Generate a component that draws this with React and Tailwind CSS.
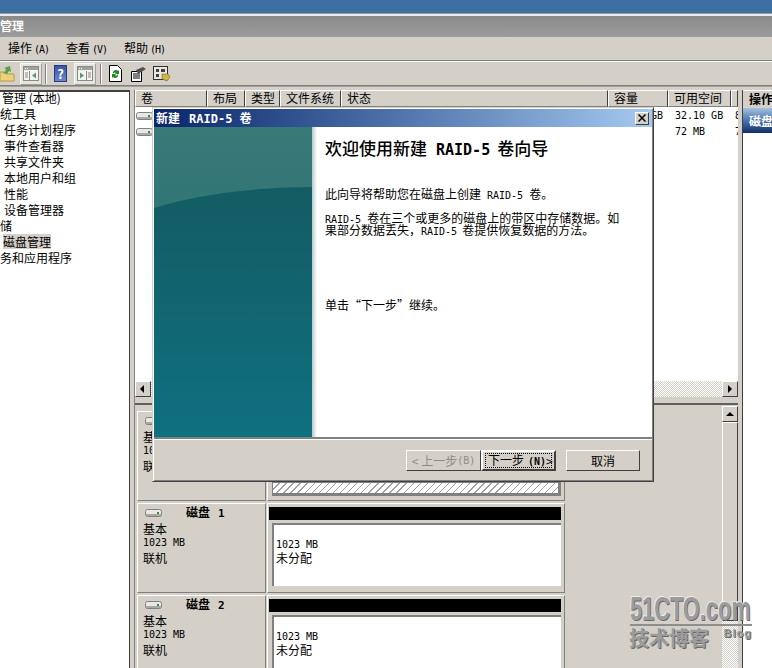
const SONG = "font-['Noto_Sans_CJK_SC',sans-serif]";

// half-width latin text, the reference font runs 6px per char at 12px
function L({ children, className = 'text-[10px]' }) {
  return <span className={`font-['DejaVu_Sans_Mono',monospace] ${className}`}>{children}</span>;
}

function DiskIcon() {
  return (
    <svg width="18" height="10" viewBox="0 0 18 10">
      <rect x="0.5" y="1.5" width="16" height="7" rx="2" fill="#e8e8e4" stroke="#808080" />
      <rect x="1" y="6" width="15" height="2" fill="#a8a8a0" />
      <rect x="12" y="4" width="2" height="2" fill="#3c8c3c" />
    </svg>
  );
}

function PaneIcon({ flip }) {
  return (
    <svg width="16" height="15" viewBox="0 0 16 15">
      <rect x="0.5" y="0.5" width="15" height="14" fill="#f4f4f0" stroke="#8a8a86" />
      <rect x="1" y="1" width="14" height="3" fill="#a0a09c" />
      <path d="M2 2.5h1M4 2.5h1" stroke="#fff" />
      <path d={flip ? 'M9.5 5v9' : 'M6.5 5v9'} stroke="#8a8a86" />
      {flip ? (
        <>
          <path d="M3 6.5l4 3-4 3z" fill="#4f9f6f" />
          <path d="M11 7h3M11 9h3M11 11h3" stroke="#8a8a86" />
        </>
      ) : (
        <>
          <path d="M13 6.5l-4 3 4 3z" fill="#4f9f6f" />
          <path d="M2 7h3M2 9h3M2 11h3" stroke="#8a8a86" />
        </>
      )}
    </svg>
  );
}

function Pressed({ flip }) {
  return (
    <div className="w-[22px] h-[22px] flex items-center justify-center border border-[#f8f8f4] border-r-[#a0a09c] border-b-[#a0a09c] bg-[#e6e4de]">
      <PaneIcon flip={flip} />
    </div>
  );
}

function Sep() {
  return <div className="w-[2px] h-[20px] border-l border-[#808080] bg-white" />;
}

function Head({ w, children }) {
  return (
    <div className="h-[17px] shrink-0 pl-[5px] overflow-hidden whitespace-nowrap text-[12px] leading-[14px] bg-[#d4d0c8] border-t border-l border-t-white border-l-white border-r border-b border-r-[#404040] border-b-[#808080]" style={{ width: w }}>
      {children}
    </div>
  );
}

function Arrow({ d }) {
  const paths = { l: 'M6 1L2 5l4 4z', r: 'M3 1l4 4-4 4z', u: 'M1 7l4-4 4 4z' };
  return (
    <div className="w-[16px] h-[16px] shrink-0 flex items-center justify-center bg-[#d4d0c8] border border-white border-r-[#404040] border-b-[#404040]">
      <svg width="10" height="10" viewBox="0 0 10 10"><path d={paths[d]} fill="#000" /></svg>
    </div>
  );
}

function Disk({ name, hatch, last }) {
  return (
    <div className={`flex shrink-0 ${last ? 'h-[80px]' : 'h-[90px] mb-[2px]'}`}>
      <div className="w-[129px] shrink-0 pl-[5px] pt-[2px] border border-white border-r-[#808080] border-b-[#808080] text-[12px] overflow-hidden">
        <div className="flex items-center h-[14px] leading-[14px] ml-[2px]">
          <DiskIcon />
          <span className="ml-[23px] font-bold whitespace-nowrap">磁盘<L className="text-[11px] ml-[8px]">{name}</L></span>
        </div>
        <div className="mt-[1px] h-[14px] leading-[15px]">基本</div>
        <div className="h-[15px] leading-[11px]"><L>1023 MB</L></div>
        <div className="h-[15px] leading-[16px]">联机</div>
      </div>
      <div className="w-[298px] shrink-0 ml-[1px] px-[1px] pt-[3px] border border-white border-r-[#808080] border-b-[#808080] overflow-hidden">
        <div className="w-[292px] h-[13px] bg-black" />
        {hatch ? (
          <div className="w-[289px] h-[66px] mt-[2px] ml-[3px] pl-[1px] pt-[53px] bg-[#808080]">
            <div className="w-[285px] h-[10px] bg-[repeating-linear-gradient(135deg,#fff_0_4px,#a0a0a0_4px_5px)]" />
          </div>
        ) : (
          <div className="w-[289px] h-[63px] mt-[3px] ml-[3px] bg-white border-t-2 border-l-2 border-[#808080] pl-[2px] pt-[12px] text-[12px]">
            <div className="h-[14px] leading-[12px]"><L>1023 MB</L></div>
            <div className="h-[14px] leading-[14px]">未分配</div>
          </div>
        )}
      </div>
    </div>
  );
}

function DlgButton({ children, className = '' }) {
  return (
    <div className={`h-[21px] flex items-center justify-center text-[12px] whitespace-nowrap bg-[#d4d0c8] border border-white border-r-[#404040] border-b-[#404040] ${className}`}>
      {children}
    </div>
  );
}

const TREE = [
  ['管理 (本地)', 'pl-[2px]'],
  ['统工具', ''],
  ['任务计划程序', 'pl-[4px]'],
  ['事件查看器', 'pl-[4px]'],
  ['共享文件夹', 'pl-[4px]'],
  ['本地用户和组', 'pl-[4px]'],
  ['性能', 'pl-[4px]'],
  ['设备管理器', 'pl-[4px]'],
  ['储', ''],
];

export default function App() {
  return (
    <div className={`relative w-[772px] h-[668px] overflow-hidden flex flex-col bg-[#d4d0c8] text-black ${SONG}`}>
      <div className="h-[13px] shrink-0 bg-[#3d6fa3]" />
      <div className="h-[3px] shrink-0 bg-[#ececec] border-t border-[#9a9a9a]" />
      <div className="h-[21px] shrink-0 bg-gradient-to-b from-[#8a8a8a] to-[#9c9c9c] text-white text-[12px] font-bold leading-[19px]">管理</div>

      <div className="h-[24px] shrink-0 flex items-center pl-[8px] pb-[2px] text-[12px] border-b border-[#808080]">
        <span className="w-[58px] whitespace-nowrap">操作<L className="text-[10px] ml-[2px] tracking-[-1px]">(A)</L></span>
        <span className="w-[58px] whitespace-nowrap">查看<L className="text-[10px] ml-[2px] tracking-[-1px]">(V)</L></span>
        <span className="whitespace-nowrap">帮助<L className="text-[10px] ml-[2px] tracking-[-1px]">(H)</L></span>
      </div>

      <div className="h-[25px] shrink-0 flex items-center border-t border-white border-b border-b-[#808080]">
        <svg width="15" height="16" viewBox="0 0 15 16">
          <path d="M0 6h5l1 2h8v7H0z" fill="#ecd27a" stroke="#b89a40" />
          <path d="M2 7l3-1 1-3-2-1 6-2 1 6-2-1-2 3z" fill="#5aa03c" />
        </svg>
        <div className="ml-[5px]"><Pressed /></div>
        <div className="ml-[3px]"><Sep /></div>
        <div className="ml-[7px] w-[13px] h-[17px] bg-gradient-to-b from-[#3a56a8] to-[#6a88d0] border border-[#2a3a7a] text-white text-[13px] font-bold leading-[15px] text-center">?</div>
        <div className="ml-[7px]"><Pressed flip /></div>
        <div className="ml-[4px]"><Sep /></div>
        <svg width="15" height="17" viewBox="0 0 15 17" className="ml-[6px]">
          <path d="M1.5.5h8l4 4v12h-12z" fill="#fff" stroke="#000" />
          <path d="M5 7a3 3 0 0 1 5-1l1-1v4H7l1-1a2 2 0 0 0-3 1zM10 11a3 3 0 0 1-5 1l-1 1V9h4l-1 1a2 2 0 0 0 3-1z" fill="#208a20" />
        </svg>
        <svg width="17" height="16" viewBox="0 0 17 16" className="ml-[7px]">
          <path d="M1.5 5.5h10v10h-10z" fill="#fff" stroke="#000" />
          <path d="M3 8h7M3 10h7M3 12h7" stroke="#000" />
          <path d="M6 4l7-3 3 2-8 5z" fill="#505050" />
        </svg>
        <svg width="18" height="17" viewBox="0 0 18 17" className="ml-[6px]">
          <rect x="0.5" y="1.5" width="14" height="13" fill="#e8e8e0" stroke="#303030" />
          <path d="M3 4h3v3H3zM8 4h4v3H8zM3 9h3v3H3z" fill="#404040" />
          <path d="M9 9h6l2 3-3 4-5-2z" fill="#d0b840" stroke="#605010" strokeWidth="0.5" />
        </svg>
      </div>

      <div className="flex-1 flex min-h-0 pt-[3px] border-t border-[#a0a0a0]">
        {/* tree */}
        <div className="w-[130px] shrink-0 bg-white border-t-2 border-r border-[#404040] text-[12px] leading-[16px] overflow-hidden">
          <div className="-mt-[2px]">
            {TREE.map(([t, c]) => (
              <div key={t} className={`h-[16px] whitespace-nowrap ${c}`}>{t}</div>
            ))}
            <div className="h-[16px] pl-[3px]"><span className="bg-[#d4d0c8] inline-block h-[15px]">磁盘管理</span></div>
            <div className="h-[16px] whitespace-nowrap">务和应用程序</div>
          </div>
        </div>

        {/* center */}
        <div className="w-[604px] shrink-0 ml-[4px] flex flex-col border-l border-[#808080]">
          <div className="flex shrink-0">
            <Head w={72}>卷</Head>
            <Head w={38}>布局</Head>
            <Head w={35}>类型</Head>
            <Head w={61}>文件系统</Head>
            <Head w={267}>状态</Head>
            <Head w={60}>容量</Head>
            <Head w={63}>可用空间</Head>
            <Head w={7}>S</Head>
          </div>
          <div className="h-[274px] shrink-0 bg-white flex text-[12px]">
            <div className="flex-1 pl-[1px] pt-[4px]">
              <div className="h-[16px]"><DiskIcon /></div>
              <div className="h-[16px]"><DiskIcon /></div>
            </div>
            <div className="w-[60px] shrink-0 pr-[5px] text-right h-[16px] leading-[14px]"><L>GB</L></div>
            <div className="w-[63px] shrink-0 pl-[7px]">
              <div className="h-[16px] leading-[14px] whitespace-nowrap"><L>32.10 GB</L></div>
              <div className="h-[16px] leading-[14px] whitespace-nowrap"><L>72 MB</L></div>
            </div>
            <div className="w-[7px] shrink-0 pl-[4px] overflow-hidden">
              <div className="h-[16px] leading-[14px]"><L>8</L></div>
              <div className="h-[16px] leading-[14px]"><L>7</L></div>
            </div>
          </div>
          <div className="h-[16px] shrink-0 flex bg-[repeating-conic-gradient(#d4d0c8_0_25%,#fff_0_50%)] bg-[length:2px_2px]">
            <Arrow d="l" />
            <div className="flex-1" />
            <Arrow d="r" />
          </div>
          <div className="h-[3px] shrink-0 border-t-2 border-[#606060] mt-[6px]" />
          <div className="flex-1 min-h-0 flex pl-[2px]">
            <div className="w-[585px] pt-[5px] overflow-hidden">
              <Disk name="0" hatch />
              <Disk name="1" />
              <Disk name="2" last />
            </div>
            <div className="w-[16px] shrink-0 flex flex-col">
              <Arrow d="u" />
              <div className="h-[199px] shrink-0 border border-white border-r-[#404040] border-b-[#404040]" />
              <div className="flex-1 bg-[repeating-conic-gradient(#d4d0c8_0_25%,#fff_0_50%)] bg-[length:2px_2px]" />
            </div>
          </div>
        </div>

        {/* action pane */}
        <div className="flex-1 ml-[4px] border-l border-[#404040] flex flex-col overflow-hidden">
          <div className="h-[18px] shrink-0 pl-[6px] text-[12px] font-bold leading-[15px] whitespace-nowrap border-t border-white">操作</div>
          <div className="h-[25px] shrink-0 pl-[6px] bg-gradient-to-b from-[#a9c0df] via-[#4a74ae] to-[#122e66] text-white text-[12px] font-bold leading-[26px] whitespace-nowrap">磁盘</div>
          <div className="flex-1 bg-white" />
        </div>
      </div>

      {/* wizard dialog */}
      <div className="absolute left-[152px] top-[107px] w-[502px] h-[375px] flex flex-col bg-[#d4d0c8] p-[1px] border border-[#d4d0c8] border-r-[#404040] border-b-[#404040] shadow-[inset_1px_1px_0_#fff,inset_-1px_-1px_0_#808080]">
        <div className="h-[18px] shrink-0 flex items-center justify-between bg-gradient-to-r from-[#0a246a] to-[#a6caf0] text-white text-[12px] font-bold pl-[2px] pr-[3px]">
          <span className="whitespace-nowrap">新建<L className="text-[12px] font-bold ml-[9px] mr-[7px]">RAID-5</L>卷</span>
          <div className="w-[14px] h-[13px] flex items-center justify-center bg-[#d4d0c8] border border-white border-r-[#404040] border-b-[#404040]">
            <svg width="8" height="8" viewBox="0 0 8 8"><path d="M0.5 0.5l7 7M7.5 0.5l-7 7" stroke="#000" strokeWidth="1.5" /></svg>
          </div>
        </div>
        <div className="h-[310px] shrink-0 flex bg-white">
          <svg width="158" height="310" viewBox="0 0 158 310" className="shrink-0">
            <defs>
              <linearGradient id="wizTop" x1="0" y1="0" x2="0" y2="1">
                <stop offset="0" stopColor="#387a78" />
                <stop offset="1" stopColor="#1f686c" />
              </linearGradient>
              <linearGradient id="wizBottom" x1="0" y1="0" x2="0" y2="1">
                <stop offset="0" stopColor="#135c63" />
                <stop offset="1" stopColor="#0f7080" />
              </linearGradient>
            </defs>
            <rect width="158" height="310" fill="url(#wizTop)" />
            <path d="M0 81C40 68 100 60 158 60V310H0z" fill="url(#wizBottom)" />
          </svg>
          <div className="flex-1 pl-[8px] bg-[linear-gradient(to_right,#b8c8cc_0,#fff_5px)] text-[12px] leading-[12px]">
            <div className="ml-[5px] mt-[12px] h-[18px] text-[17px] leading-[18px] font-medium whitespace-nowrap">欢迎使用新建<L className="text-[15px] font-bold ml-[9px] mr-[7px]">RAID-5</L>卷向导</div>
            <div className="ml-[5px] mt-[31px] h-[12px] whitespace-nowrap">此向导将帮助您在磁盘上创建<L className="text-[10px] mx-[6px]">RAID-5</L>卷。</div>
            <div className="ml-[5px] mt-[12px] h-[12px] whitespace-nowrap"><L className="text-[10px] mr-[6px]">RAID-5</L>卷在三个或更多的磁盘上的带区中存储数据。如</div>
            <div className="ml-[5px] h-[12px] whitespace-nowrap">果部分数据丢失，<L className="text-[10px] mr-[5px]">RAID-5</L>卷提供恢复数据的方法。</div>
            <div className="ml-[5px] mt-[63px] h-[12px] whitespace-nowrap">单击“下一步”继续。</div>
          </div>
        </div>
        <div className="flex-1 border-t-2 border-t-[#808080] flex items-start pt-[11px] pl-[252px] shadow-[inset_0_1px_0_#fff]">
          <DlgButton className="w-[75px] text-[#8f8c84]">&lt; 上一步 <L>(B)</L></DlgButton>
          <DlgButton className="w-[75px] border-black border-2">
            <span className="w-[67px] h-[15px] flex items-center justify-between border border-dotted border-black px-[2px] leading-[13px] whitespace-nowrap">
              <span>下一步<L className="text-[10px] ml-[4px] font-bold">(N)</L></span>
              <span>&gt;</span>
            </span>
          </DlgButton>
          <DlgButton className="w-[74px] ml-[10px]">取消</DlgButton>
        </div>
      </div>

      {/* watermark */}
      <div className="absolute left-[630px] top-[595px] w-[122px] text-[#9c9c9c]">
        <div className="h-[28px] text-[33px] leading-[28px] font-bold font-['Liberation_Sans',sans-serif] whitespace-nowrap scale-x-[0.66] origin-left [text-shadow:1px_1px_0_#6a6a6a,-1px_-1px_0_#eeeeee]">51CTO.com</div>
        <div className="h-[2px] bg-[#8e8e8e] mt-[1px]" />
        <div className="flex justify-between mt-[1px] -ml-[1px]">
          <span className="text-[20px] leading-[22px] font-bold whitespace-nowrap [text-shadow:1px_1px_0_#6a6a6a]">技术博客</span>
          <span className="text-[11px] leading-[13px] font-bold font-['Liberation_Sans',sans-serif] tracking-[1px] [text-shadow:1px_1px_0_#6a6a6a]">Blog</span>
        </div>
      </div>
    </div>
  );
}
